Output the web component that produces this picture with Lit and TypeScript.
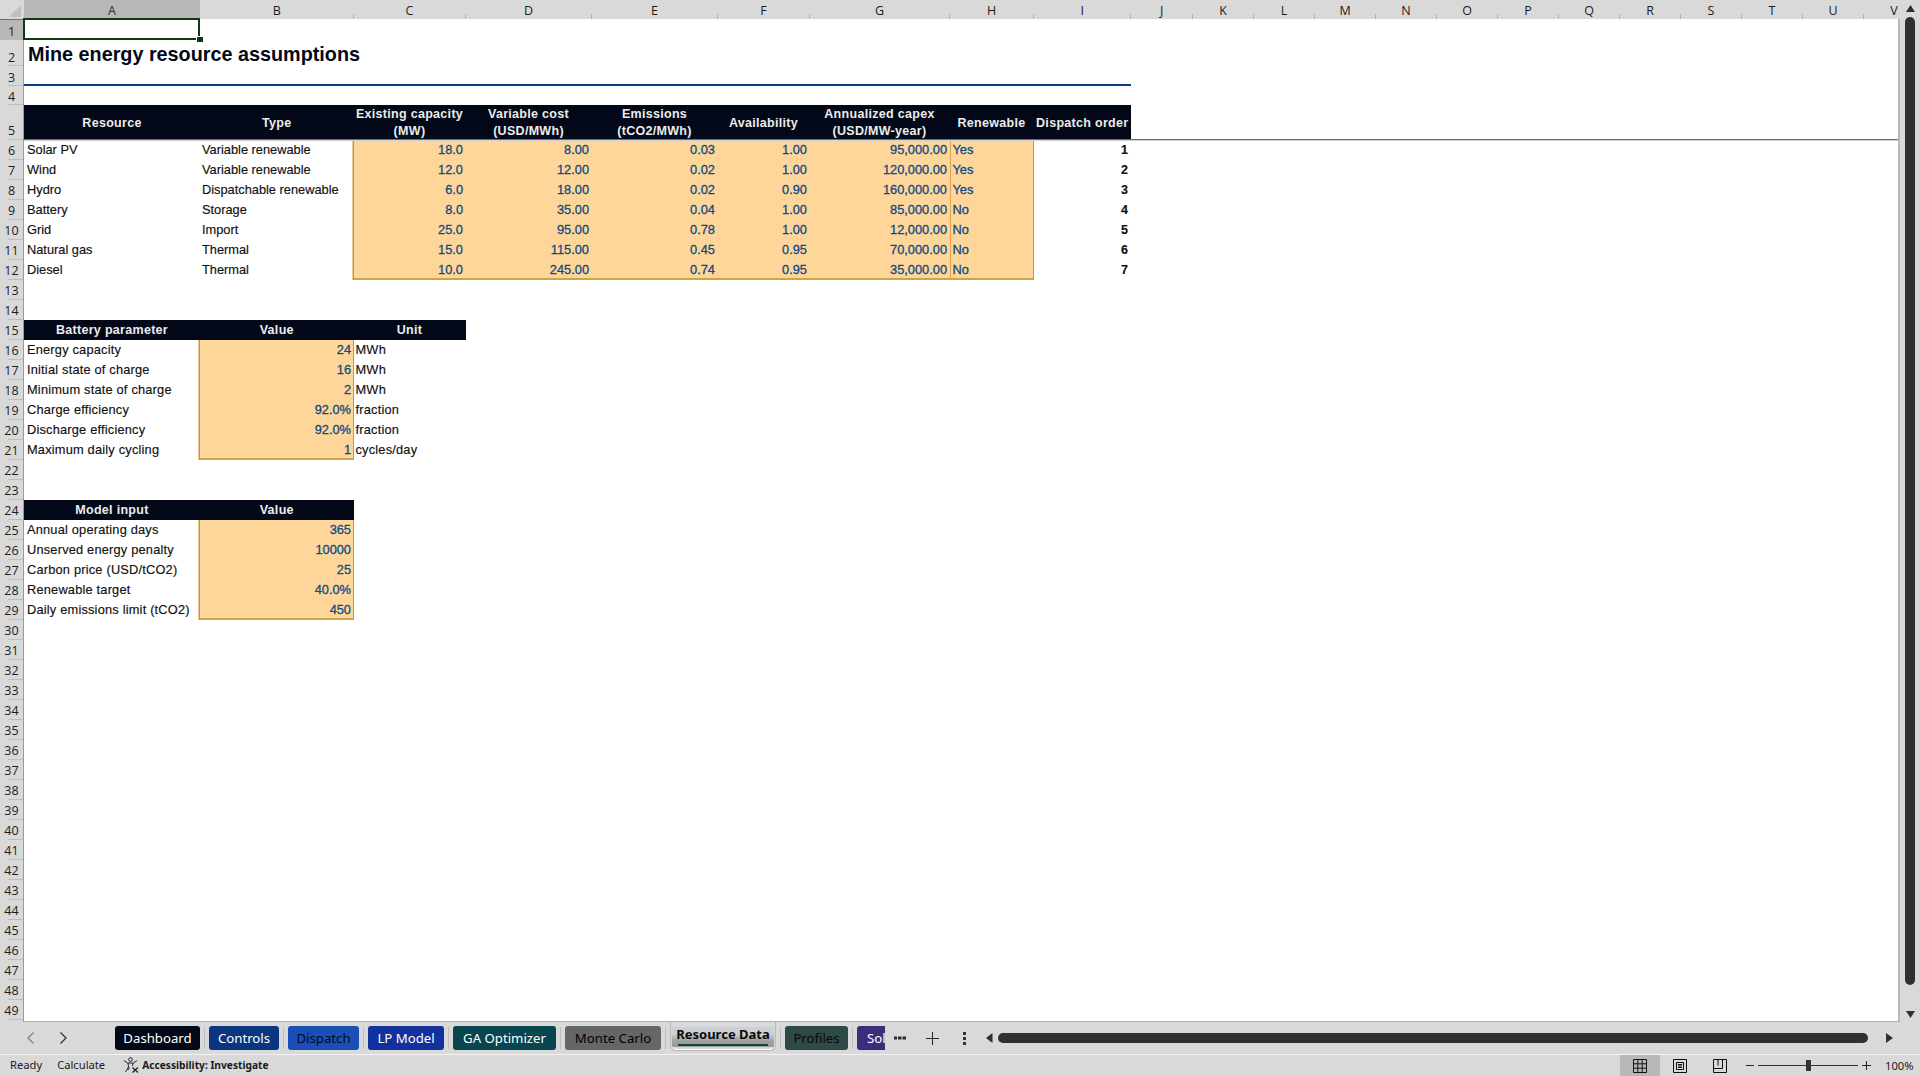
import { LitElement, html, css } from "lit";
import { customElement } from "lit/decorators.js";

const COLS = [176, 153.5, 112, 126, 126, 92, 140, 84, 97.5, 61.5, 61, 61, 61, 61, 61, 61, 61, 61, 61, 61, 61, 61];
const LETTERS = "ABCDEFGHIJKLMNOPQRSTUV".split("");
const ROWS: number[] = [21, 26, 20, 19, 34.5];
for (let i = 6; i <= 49; i++) ROWS.push(20);

type Cell = { r: number; c: number; t: string; k: string };
const cells: Cell[] = [];
const add = (r: number, c: number, t: string, k: string) => cells.push({ r, c, t, k });

["Resource", "Type", "Existing capacity\n(MW)", "Variable cost\n(USD/MWh)", "Emissions\n(tCO2/MWh)", "Availability", "Annualized capex\n(USD/MW-year)", "Renewable", "Dispatch order"].forEach((t, i) => add(5, i + 1, t, "head"));

const resources = [
  ["Solar PV", "Variable renewable", "18.0", "8.00", "0.03", "1.00", "95,000.00", "Yes", "1"],
  ["Wind", "Variable renewable", "12.0", "12.00", "0.02", "1.00", "120,000.00", "Yes", "2"],
  ["Hydro", "Dispatchable renewable", "6.0", "18.00", "0.02", "0.90", "160,000.00", "Yes", "3"],
  ["Battery", "Storage", "8.0", "35.00", "0.04", "1.00", "85,000.00", "No", "4"],
  ["Grid", "Import", "25.0", "95.00", "0.78", "1.00", "12,000.00", "No", "5"],
  ["Natural gas", "Thermal", "15.0", "115.00", "0.45", "0.95", "70,000.00", "No", "6"],
  ["Diesel", "Thermal", "10.0", "245.00", "0.74", "0.95", "35,000.00", "No", "7"],
];
resources.forEach((row, ri) => {
  row.forEach((t, ci) => {
    const r = ri + 6;
    const c = ci + 1;
    if (c === 1) add(r, c, t, "txt");
    else if (c === 2) add(r, c, t, "txt tb");
    else if (c === 9) add(r, c, t, "num order");
    else {
      let k = c === 8 ? "inp left" : "inp num";
      if (c === 3) k += " bl";
      if (c === 8) k += " br hl";
      if (r === 12) k += " bb";
      add(r, c, t, k);
    }
  });
});

["Battery parameter", "Value", "Unit"].forEach((t, i) => add(15, i + 1, t, "head"));
const battery = [
  ["Energy capacity", "24", "MWh"],
  ["Initial state of charge", "16", "MWh"],
  ["Minimum state of charge", "2", "MWh"],
  ["Charge efficiency", "92.0%", "fraction"],
  ["Discharge efficiency", "92.0%", "fraction"],
  ["Maximum daily cycling", "1", "cycles/day"],
];
battery.forEach((row, i) => {
  add(16 + i, 1, row[0], "txt wide");
  add(16 + i, 2, row[1], "inp num bl br" + (i === 5 ? " bb" : ""));
  add(16 + i, 3, row[2], "txt wide tb");
});

["Model input", "Value"].forEach((t, i) => add(24, i + 1, t, "head"));
const model = [
  ["Annual operating days", "365"],
  ["Unserved energy penalty", "10000"],
  ["Carbon price (USD/tCO2)", "25"],
  ["Renewable target", "40.0%"],
  ["Daily emissions limit (tCO2)", "450"],
];
model.forEach((row, i) => {
  add(25 + i, 1, row[0], "txt wide");
  add(25 + i, 2, row[1], "inp num bl br" + (i === 4 ? " bb" : ""));
});

const TABS = [
  { t: "Dashboard", w: 85, bg: "#020817", fg: "#ffffff" },
  { t: "Controls", w: 70, bg: "#0a357f", fg: "#ffffff" },
  { t: "Dispatch", w: 71, bg: "#1a50b5", fg: "#020a20" },
  { t: "LP Model", w: 76, bg: "#12319c", fg: "#ffffff" },
  { t: "GA Optimizer", w: 103, bg: "#07454f", fg: "#ffffff" },
  { t: "Monte Carlo", w: 96, bg: "#666666", fg: "#000000" },
];

@customElement("app-root")
export class AppRoot extends LitElement {
  static styles = css`
    :host { display: flex; flex-direction: column; width: 1920px; height: 1076px; overflow: hidden; background: #d9d9d9; font-family: "Liberation Sans", Arial, sans-serif; }
    .top { display: flex; flex: none; height: 1022px; }
    .pane { width: 1900px; flex: none; display: flex; flex-direction: column; }
    .colhead { display: flex; height: 19px; flex: none; background: #d9d9d9; border-bottom: 1px solid #6e6e6e; margin-bottom: -1px; overflow: hidden; position: relative; z-index: 3; }
    .corner { width: 24px; flex: none; display: flex; align-items: flex-start; justify-content: flex-end; }
    .corner svg { margin: 5px 3px 0 0; }
    .letter { flex: none; height: 19px; box-sizing: border-box; display: flex; align-items: center; justify-content: center; font: 500 12.5px "Open Sans", "Noto Sans", sans-serif; color: #1c1c1c; position: relative; padding-top: 2px; }
    .letter::after { content: ""; position: absolute; right: 0; bottom: 0; height: 5px; width: 1px; background: #b4b4b4; }
    .letter.sel { background: #b8b8b8; color: #0f3d1e; }
    .letter.sel::after { display: none; }
    .main { display: flex; flex: 1; min-height: 0; }
    .rowhead { width: 24px; flex: none; box-sizing: border-box; border-right: 1px solid #9a9a9a; display: grid; align-content: start; }
    .rownum { display: flex; align-items: flex-end; justify-content: center; font: 500 12.5px "Open Sans", "Noto Sans", sans-serif; color: #1c1c1c; position: relative; padding-bottom: .5px; line-height: 16px; box-sizing: border-box; }
    .rownum::after { content: ""; position: absolute; left: 8px; right: 0; bottom: 0; height: 1px; background: #bdbdbd; }
    .rownum.sel { background: #b8b8b8; }
    .sheet { flex: none; width: 1874px; background: #fff; position: relative; z-index: 4; display: grid; align-content: start; border-right: 2px solid #b8b8b8; border-bottom: 1px solid #b0b0b0; }
    .cell { box-sizing: border-box; display: flex; align-items: center; font-size: 12.8px; line-height: 16px; white-space: nowrap; color: #101010; min-width: 0; padding: 0 3px; -webkit-text-stroke: .15px currentColor; }
    .txt { justify-content: flex-start; }
    .tb { padding-left: 2px; }
    .wide { letter-spacing: .2px; }
    .num { justify-content: flex-end; }
    .inp { background: #ffd699; color: #0d4a86; padding-right: 2.5px; -webkit-text-stroke: .3px currentColor; }
    .left { justify-content: flex-start; padding-left: 2px; }
    .bl { box-shadow: -1.5px 0 0 #c8963c; }
    .br { border-right: 1.5px solid #c8963c; padding-right: 1.5px; }
    .bb { border-bottom: 2px solid #c9a646; padding-top: 2px; }
    .hl { border-left: 1px solid #e9a04e; }
    .order { font-weight: 700; font-size: 12.5px; }
    .head { background: #020817; color: #ececec; font-weight: 700; font-size: 12.5px; letter-spacing: .3px; justify-content: center; text-align: center; white-space: pre-line; line-height: 16.5px; padding: 1px 0 0; -webkit-text-stroke: 0; }
    .title { font-weight: 700; font-size: 19.8px; color: #020817; padding: 1px 4px 0; -webkit-text-stroke: 0; }
    .rule { background: #0b3a87; height: 2px; align-self: end; }
    .freeze { position: absolute; left: 0; right: 0; top: 120px; height: 1px; background: #6e6e6e; box-shadow: 0 1px 0 #d0d0d0; }
    .selbox { position: absolute; left: -1px; top: -1px; width: 177px; height: 22px; box-sizing: border-box; border: 2px solid #0c3a14; pointer-events: none; }
    .handle { position: absolute; left: 173px; top: 18px; width: 6px; height: 5px; background: #0c3a14; outline: 1px solid #fff; }
    .vscroll { flex: 1; background: #d9d9d9; display: flex; flex-direction: column; align-items: center; }
    .vtrack { width: 10px; flex: none; height: 968px; background: #303030; border-radius: 5px; margin-top: 5px; }
    .varrow { flex: none; }
    .varrow.up { margin-top: 5px; }
    .varrow.down { margin-top: 26px; }
    .tabbar { flex: none; height: 32px; display: flex; align-items: center; background: #d9d9d9; position: relative; }
    .nav { width: 115px; flex: none; display: flex; align-items: center; padding-left: 26px; gap: 22px; box-sizing: border-box; }
    .tabs { display: flex; flex: none; align-items: center; gap: 9px; }
    .tab { height: 24px; box-sizing: border-box; border-radius: 3px; display: flex; align-items: center; justify-content: center; font: 13.2px "Noto Sans", "Open Sans", sans-serif; flex: none; white-space: nowrap; }
    .sep { width: 1px; height: 22px; background: #bdbdbd; flex: none; margin: 0 -5px; }
    .active { width: 106px; height: 29px; margin: -3px 0 0; background: #d9d9d9; border: 1px solid #b8b8b8; border-top: none; border-radius: 0 0 6px 6px; box-shadow: inset 0 -1px 0 #fff; display: flex; flex-direction: column; align-items: stretch; flex: none; padding: 5px 1px 0; box-sizing: border-box; }
    .active .in { height: 20px; background: linear-gradient(#c8d0dc 0, #cfcfcf 35%, #9f9f9f 70%, #9a9a9a 100%); font: 700 13px "Noto Sans", "Open Sans", sans-serif; color: #0a0a0a; text-align: center; line-height: 14px; position: relative; white-space: nowrap; }
    .active .in::after { content: ""; position: absolute; left: 6px; right: 6px; bottom: 1px; height: 2px; background: #0f4d2a; }
    .sol { justify-content: flex-start; padding-left: 10px; overflow: hidden; }
    .tools { display: flex; align-items: center; flex: none; }
    .thumb { height: 10px; width: 870px; background: #303030; border-radius: 5px; flex: none; margin-left: 5px; }
    .status { flex: none; height: 21px; border-top: 1px solid #f3f3f3; background: #d9d9d9; display: flex; align-items: center; font: 11.2px "Noto Sans", "Open Sans", sans-serif; color: #1a1a1a; }
    .st-left { display: flex; align-items: center; flex: 1; padding: 0 0 2px 10px; }
    .st-calc { margin-left: 15px; }
    .st-acc { display: flex; align-items: center; margin-left: 18px; gap: 3px; font-weight: 700; font-size: 10.2px; }
    .st-right { display: flex; align-items: center; height: 100%; }
    .vbtn { width: 40px; height: 100%; display: flex; align-items: center; justify-content: center; }
    .vbtn.on { background: #b8b8b8; }
    .slider { width: 100px; height: 1px; background: #333; position: relative; margin: 0 4px; }
    .slider i { position: absolute; left: 48px; top: -5px; width: 5px; height: 11px; background: #333; }
    .zm { margin: 0 9px 0 14px; width: 26px; white-space: nowrap; }
  `;

  render() {
    const gridCols = COLS.map((w) => w + "px").join(" ");
    const gridRows = ROWS.map((h) => h + "px").join(" ");
    return html`
      <div class="top">
        <div class="pane">
          <div class="colhead">
            <div class="corner"><svg width="12" height="12" viewBox="0 0 12 12"><path d="M12 0V12H0Z" fill="#c0c0c0" /></svg></div>
            ${LETTERS.map((l, i) => html`<div class="letter ${i === 0 ? "sel" : ""}" style="width:${COLS[i]}px">${l}</div>`)}
          </div>
          <div class="main">
            <div class="rowhead" style="grid-template-rows:${gridRows}">
              ${ROWS.map((_, i) => html`<div class="rownum ${i === 0 ? "sel" : ""}">${i + 1}</div>`)}
            </div>
            <div class="sheet" style="grid-template-columns:${gridCols};grid-template-rows:${gridRows}">
              <div class="cell title" style="grid-row:2;grid-column:1 / span 5">Mine energy resource assumptions</div>
              <div class="rule" style="grid-row:3;grid-column:1 / span 9"></div>
              ${cells.map((c) => html`<div class="cell ${c.k}" style="grid-row:${c.r};grid-column:${c.c}">${c.t}</div>`)}
              <div class="freeze"></div>
              <div class="selbox"></div>
              <div class="handle"></div>
            </div>
          </div>
        </div>
        <div class="vscroll">
          <svg class="varrow up" width="11" height="7" viewBox="0 0 11 7"><path d="M1 7 5.500 0 10 7Z" fill="#303030" /></svg>
          <div class="vtrack"></div>
          <svg class="varrow down" width="11" height="7" viewBox="0 0 11 7"><path d="M1 0 5.500 7 10 0Z" fill="#303030" /></svg>
        </div>
      </div>
      <div class="tabbar">
        <div class="nav">
          <svg width="10" height="14" viewBox="0 0 10 14"><path d="M7.500 1.500 2 7l5.500 5.500" fill="none" stroke="#7d7d7d" stroke-width="1.200" /></svg>
          <svg width="10" height="14" viewBox="0 0 10 14"><path d="M2.500 1.500 8 7l-5.500 5.500" fill="none" stroke="#2b2b2b" stroke-width="1.200" /></svg>
        </div>
        <div class="tabs">
          ${TABS.map((t) => html`<div class="tab" style="width:${t.w}px;background:${t.bg};color:${t.fg}">${t.t}</div><div class="sep"></div>`)}
          <div class="active"><div class="in">Resource Data</div></div>
          <div class="sep"></div>
          <div class="tab" style="width:63px;background:#2f4848;color:#0a0a0a">Profiles</div>
          <div class="sep"></div>
          <div class="tab sol" style="width:28px;background:#3a2d7c;color:#fff;border-radius:3px 0 0 3px">Sol</div>
        </div>
        <div class="tools">
          <svg style="margin-left:9px" width="12" height="6" viewBox="0 0 12 6"><path d="M0 1.500h12v3H0z" fill="#2b2b2b" /><path d="M3.500 1v4M8 1v4" stroke="#d9d9d9" /></svg>
          <svg style="margin-left:20px" width="13" height="13" viewBox="0 0 13 13"><path d="M6.500 0v13M0 6.500h13" stroke="#222" stroke-width="1" /></svg>
          <svg style="margin-left:24px" width="3" height="13" viewBox="0 0 3 13"><path d="M0 0h3v3H0zM0 5h3v3H0zM0 10h3v3H0z" fill="#333" /></svg>
          <svg style="margin-left:20px" width="7" height="10" viewBox="0 0 7 10"><path d="M6.500 0v10L0 5Z" fill="#303030" /></svg>
          <div class="thumb"></div>
          <svg style="margin-left:18px" width="7" height="10" viewBox="0 0 7 10"><path d="M0 0v10L7 5Z" fill="#303030" /></svg>
        </div>
      </div>
      <div class="status">
        <div class="st-left">
          <span>Ready</span><span class="st-calc">Calculate</span>
          <span class="st-acc">
            <svg width="16" height="16" viewBox="0 0 16 16" fill="none" stroke="#222" stroke-width="1">
              <circle cx="7.500" cy="2.500" r="1.800" />
              <path d="M1 3.500 4.500 6h6L14 3.500M5 6l.5 4L2.500 15M10 6l-.5 3M6.500 10.500 5 13" />
              <path d="M9.500 10.500l5.500 5M15 10.500l-5.500 5" stroke-width="1.300" />
            </svg>
            Accessibility: Investigate
          </span>
        </div>
        <div class="st-right">
          <div class="vbtn on"><svg width="14" height="14" viewBox="0 0 14 14" fill="none" stroke="#111"><path d="M.5.500h13v13H.5zM.5 4.800h13M.5 9.200h13M4.800.5v13M9.200.5v13" /></svg></div>
          <div class="vbtn"><svg width="14" height="14" viewBox="0 0 14 14" fill="none" stroke="#111"><path d="M.5.500h13v13H.5zM3.500 3.500h7v7h-7zM5 5.500h4M5 7h4M5 8.500h4" /></svg></div>
          <div class="vbtn"><svg width="14" height="14" viewBox="0 0 14 14" fill="none" stroke="#111"><path d="M.5.500h13v13H.5zM.5 9.500h9V.5M5 .5v6" /></svg></div>
          <svg style="margin-left:6px" width="8" height="9" viewBox="0 0 8 9"><path d="M0 4.500h8" stroke="#222" /></svg>
          <div class="slider"><i></i></div>
          <svg width="9" height="9" viewBox="0 0 9 9"><path d="M0 4.500h9M4.500 0v9" stroke="#222" /></svg>
          <span class="zm">100%</span>
        </div>
      </div>
    `;
  }
}
